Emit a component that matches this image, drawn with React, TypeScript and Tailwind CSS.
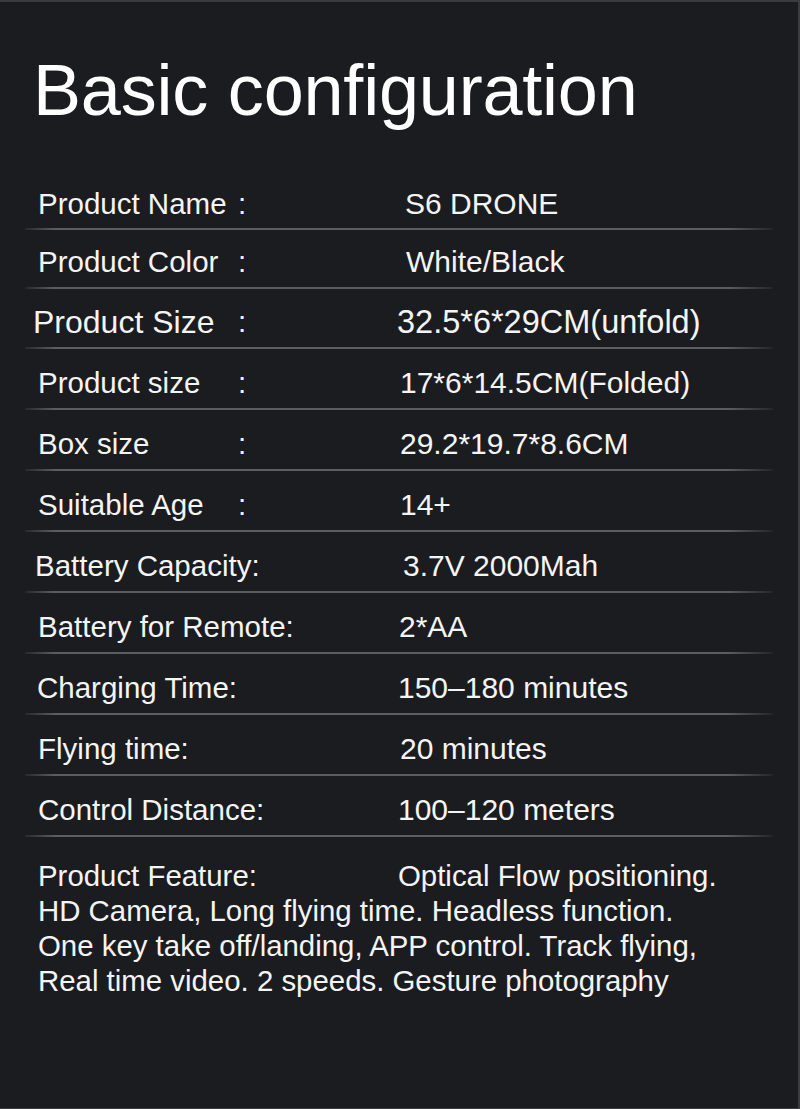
type SpecRow = {
  label: string;
  colon: boolean;
  value: string;
  labelPad: string;
  valuePad: string;
  rowPad: string;
  big?: boolean;
};

// spec table rows, paddings nudge each row to line up with the original artwork
const rows: SpecRow[] = [
  { label: 'Product Name', colon: true, value: 'S6 DRONE', labelPad: 'pl-[38px]', valuePad: 'pl-[9px]', rowPad: 'pb-[6px]' },
  { label: 'Product Color', colon: true, value: 'White/Black', labelPad: 'pl-[38px]', valuePad: 'pl-[10px]', rowPad: 'pt-[14px] pb-[7px]' },
  { label: 'Product Size', colon: true, value: '32.5*6*29CM(unfold)', labelPad: 'pl-[33px]', valuePad: 'pl-[1px]', rowPad: 'pt-[15px] pb-[7px]', big: true },
  { label: 'Product size', colon: true, value: '17*6*14.5CM(Folded)', labelPad: 'pl-[38px]', valuePad: 'pl-[4px]', rowPad: 'pt-[16px] pb-[7px]' },
  { label: 'Box size', colon: true, value: '29.2*19.7*8.6CM', labelPad: 'pl-[38px]', valuePad: 'pl-[4px]', rowPad: 'pt-[16px] pb-[7px]' },
  { label: 'Suitable Age', colon: true, value: '14+', labelPad: 'pl-[38px]', valuePad: 'pl-[4px]', rowPad: 'pt-[16px] pb-[7px]' },
  { label: 'Battery Capacity:', colon: false, value: '3.7V 2000Mah', labelPad: 'pl-[35px]', valuePad: 'pl-[7px]', rowPad: 'pt-[16px] pb-[7px]' },
  { label: 'Battery for Remote:', colon: false, value: '2*AA', labelPad: 'pl-[38px]', valuePad: 'pl-[3px]', rowPad: 'pt-[16px] pb-[7px]' },
  { label: 'Charging Time:', colon: false, value: '150–180 minutes', labelPad: 'pl-[37px]', valuePad: 'pl-[2px]', rowPad: 'pt-[16px] pb-[7px]' },
  { label: 'Flying time:', colon: false, value: '20 minutes', labelPad: 'pl-[38px]', valuePad: 'pl-[4px]', rowPad: 'pt-[16px] pb-[7px]' },
  { label: 'Control Distance:', colon: false, value: '100–120 meters', labelPad: 'pl-[38px]', valuePad: 'pl-[2px]', rowPad: 'pt-[16px] pb-[7px]' },
];

const Divider = () => (
  <div className="mx-[25px] h-[2px] bg-[linear-gradient(90deg,rgba(90,91,95,0.2),#5c5d61_4%,#5c5d61_94%,rgba(90,91,95,0.15))]" />
);

const App = () => {
  return (
    <div className="h-[1109px] w-[800px] overflow-hidden border-t-2 border-r-2 border-b border-[#3b3c40] bg-[#1b1c20] font-['Liberation_Sans',Arial,sans-serif] text-[#f4f4f4]">
      {/* Title */}
      <h1 className="pt-[48px] pl-[33px] text-[72px] leading-[80px] tracking-[-0.2px] font-normal text-white">
        Basic configuration
      </h1>

      {/* Spec rows */}
      <div className="mt-[56px]">
        {rows.map((row, i) => (
          <div key={row.label + i}>
            <div className={`flex leading-[36px] ${row.rowPad} ${row.big ? 'text-[32px]' : 'text-[29.5px]'}`}>
              <div className={`w-[238px] shrink-0 whitespace-nowrap ${row.labelPad}`}>{row.label}</div>
              <div className={`w-[158px] shrink-0 ${row.big ? 'text-[29.5px]' : ''}`}>{row.colon ? ':' : ''}</div>
              <div className={`whitespace-nowrap ${row.valuePad} ${row.big ? 'text-[32.5px]' : 'text-[30px]'}`}>
                {row.value}
              </div>
            </div>
            <Divider />
          </div>
        ))}
      </div>

      {/* Feature text */}
      <div className="pt-[21px] pl-[38px] text-[29.4px] leading-[35px] whitespace-nowrap">
        <div>
          <span className="inline-block w-[360px]">Product Feature:</span>
          <span>Optical Flow positioning.</span>
        </div>
        <div>HD Camera, Long flying time. Headless function.</div>
        <div>One key take off/landing, APP control. Track flying,</div>
        <div>Real time video. 2 speeds. Gesture photography</div>
      </div>
    </div>
  );
};

export default App;
